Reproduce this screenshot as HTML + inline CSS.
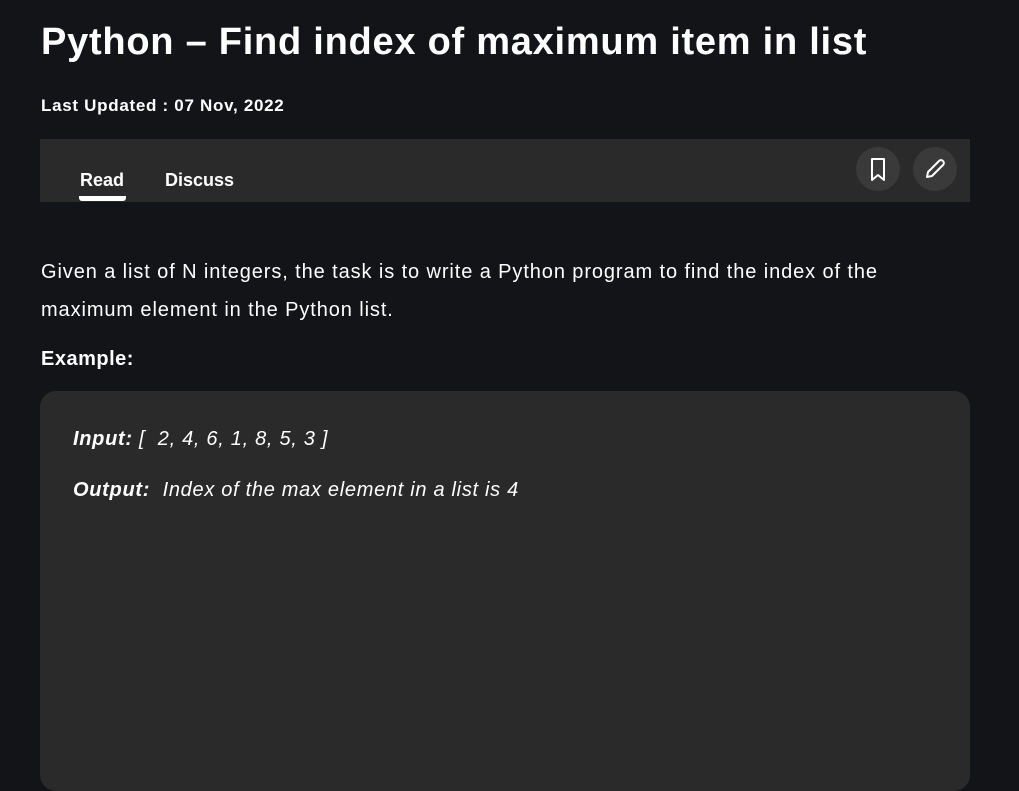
<!DOCTYPE html>
<html><head><style>
body{margin:0;background:#131417;width:1019px;height:766px;overflow:hidden;font-family:"Liberation Sans",sans-serif;color:#fff}
h1{position:absolute;left:41px;top:21px;margin:0;font-size:38px;font-weight:bold;letter-spacing:0.75px}
.upd{position:absolute;left:41px;top:96px;font-size:17px;font-weight:bold;letter-spacing:0.7px}
.bar{position:absolute;left:40px;top:139px;width:930px;height:63px;background:#2a2a2b}
.tab{position:absolute;top:170px;font-size:18px;font-weight:bold}
.ul{position:absolute;left:79px;top:196px;width:47px;height:5px;background:#fff;border-radius:0 0 3px 3px}
.btn{position:absolute;top:147px;width:44px;height:44px;border-radius:50%;background:#3a3a3b}
.p{position:absolute;left:41px;font-size:20px;line-height:38px;letter-spacing:0.9px}
.box{position:absolute;left:40px;top:391px;width:930px;height:400px;background:#2a2a2b;border-radius:16px}
.ex{position:absolute;left:73px;font-size:20px;font-style:italic;letter-spacing:0.7px}
</style></head><body>
<h1>Python – Find index of maximum item in list</h1>
<div class="upd">Last Updated : 07 Nov, 2022</div>
<div class="bar"></div>
<div class="tab" style="left:80px">Read</div>
<div class="tab" style="left:165px">Discuss</div>
<div class="ul"></div>
<div class="btn" style="left:856px"><svg width="44" height="44" viewBox="0 0 44 44"><path d="M16 12h12v21l-6-5-6 5z" fill="none" stroke="#fff" stroke-width="2" stroke-linejoin="round"/></svg></div>
<div class="btn" style="left:913px"><svg width="44" height="44" viewBox="0 0 44 44"><path d="M14 30l1-5 11-11a2 2 0 0 1 4 4L19 29z" fill="none" stroke="#fff" stroke-width="2" stroke-linejoin="round"/></svg></div>
<div class="p" style="top:253px">Given a list of N integers, the task is to write a Python program to find the index of the<br>maximum element in the Python list.</div>
<div class="p" style="top:340px;font-weight:bold;font-size:20px;letter-spacing:0.5px">Example:</div>
<div class="box"></div>
<div class="ex" style="top:428px"><b>Input:</b> [ &nbsp;2, 4, 6, 1, 8, 5, 3 ]</div>
<div class="ex" style="top:479px"><b>Output:</b> &nbsp;Index of the max element in a list is 4</div>
</body></html>
